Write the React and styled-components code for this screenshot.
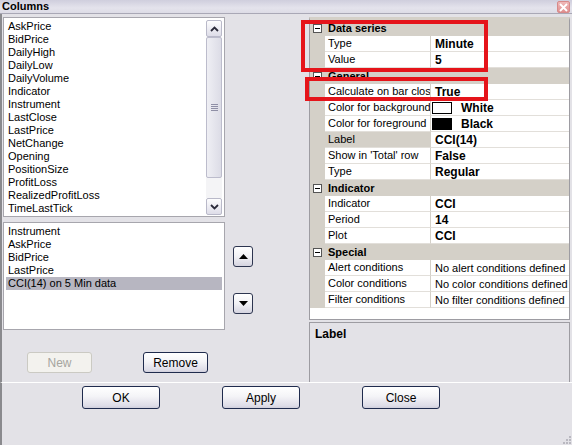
import React from "react";
import styled, { createGlobalStyle } from "styled-components";

const GlobalStyle = createGlobalStyle`
  html, body {
    margin: 0;
    padding: 0;
    background: #e3e2e7;
  }
  * { box-sizing: border-box; }
`;

const available = [
  "AskPrice", "BidPrice", "DailyHigh", "DailyLow", "DailyVolume", "Indicator",
  "Instrument", "LastClose", "LastPrice", "NetChange", "Opening", "PositionSize",
  "ProfitLoss", "RealizedProfitLoss", "TimeLastTick",
];

const chosen = ["Instrument", "AskPrice", "BidPrice", "LastPrice", "CCI(14) on 5 Min data"];

const rows = [
  { cat: "Data series" },
  { name: "Type", value: "Minute" },
  { name: "Value", value: "5" },
  { cat: "General" },
  { name: "Calculate on bar close", value: "True" },
  { name: "Color for background", value: "White", swatch: "#ffffff" },
  { name: "Color for foreground", value: "Black", swatch: "#000000" },
  { name: "Label", value: "CCI(14)", selected: true },
  { name: "Show in 'Total' row", value: "False" },
  { name: "Type", value: "Regular" },
  { cat: "Indicator" },
  { name: "Indicator", value: "CCI" },
  { name: "Period", value: "14" },
  { name: "Plot", value: "CCI" },
  { cat: "Special" },
  { name: "Alert conditions", value: "No alert conditions defined", plain: true },
  { name: "Color conditions", value: "No color conditions defined", plain: true },
  { name: "Filter conditions", value: "No filter conditions defined", plain: true },
];

const Chevron = ({ down }) => (
  <svg width="9" height="6" viewBox="0 0 9 6">
    <path
      d={down ? "M1 1 L4.5 4.5 L8 1" : "M1 5 L4.5 1.5 L8 5"}
      fill="none"
      stroke="#2b2b3a"
      strokeWidth="1.8"
    />
  </svg>
);

const Triangle = ({ down }) => (
  <svg width="9" height="5" viewBox="0 0 9 5">
    <path d={down ? "M0 0 H9 L4.5 5 Z" : "M0 5 H9 L4.5 0 Z"} fill="#000" />
  </svg>
);

const App = () => {
  return (
    <Window>
      <GlobalStyle />
      <TitleBar>
        <Title>Columns</Title>
        <CloseBtn>
          <svg width="9" height="9" viewBox="0 0 9 9">
            <path d="M1 1 L8 8 M8 1 L1 8" stroke="#fff" strokeWidth="1.8" />
          </svg>
        </CloseBtn>
      </TitleBar>

      <Body>
        <LeftPane>
          <ListBox $height={200}>
            <Items>
              {available.map((a) => (
                <Item key={a}>{a}</Item>
              ))}
            </Items>
            <ScrollBar>
              <ScrollBtn><Chevron /></ScrollBtn>
              <Track>
                <Thumb>
                  <Grip />
                </Thumb>
              </Track>
              <ScrollBtn><Chevron down /></ScrollBtn>
            </ScrollBar>
          </ListBox>

          <ChosenRow>
            <ListBox $height={108}>
              <Items>
                {chosen.map((c, i) => (
                  <Item key={c} $selected={i === chosen.length - 1}>{c}</Item>
                ))}
              </Items>
            </ListBox>
            <ArrowCol>
              <ArrowBtn><Triangle /></ArrowBtn>
              <ArrowBtn><Triangle down /></ArrowBtn>
            </ArrowCol>
          </ChosenRow>

          <EditButtons>
            <Button $w={65} $h={21} disabled>New</Button>
            <Button $w={65} $h={21}>Remove</Button>
          </EditButtons>
        </LeftPane>

        <RightPane>
          <Grid>
            {rows.map((r, i) =>
              r.cat ? (
                <CatRow key={i}>
                  <Gutter>
                    <Expander>
                      <svg width="9" height="9" viewBox="0 0 9 9">
                        <rect x="0.5" y="0.5" width="8" height="8" fill="none" stroke="#555" />
                        <path d="M2 4.5 H7" stroke="#000" />
                      </svg>
                    </Expander>
                  </Gutter>
                  <CatName>{r.cat}</CatName>
                </CatRow>
              ) : (
                <PropRow key={i}>
                  <Gutter />
                  <NameCell $selected={r.selected}>{r.name}</NameCell>
                  <ValueCell $plain={r.plain}>
                    {r.swatch && <Swatch $color={r.swatch} />}
                    {r.value}
                  </ValueCell>
                </PropRow>
              )
            )}
          </Grid>
          <DescBox>Label</DescBox>
          <RedBox $left={-8} $top={3} $w={187} $h={52} />
          <RedBox $left={-4} $top={60} $w={183} $h={24} />
        </RightPane>
      </Body>

      <Footer>
        <Button $w={78} $h={23}>OK</Button>
        <Button $w={78} $h={23}>Apply</Button>
        <Button $w={78} $h={23}>Close</Button>
      </Footer>
      <ResizeGrip>
        <svg width="12" height="12" viewBox="0 0 12 12">
          {[[9, 3], [9, 6], [6, 6], [9, 9], [6, 9], [3, 9]].map(([x, y]) => (
            <rect key={`${x}-${y}`} x={x} y={y} width="2" height="2" fill="#b9b8c0" />
          ))}
        </svg>
      </ResizeGrip>
    </Window>
  );
};

export default App;

const Window = styled.div`
  position: relative;
  width: 572px;
  height: 445px;
  display: flex;
  flex-direction: column;
  background: #e3e2e7;
  font-family: "Liberation Sans", Arial, sans-serif;
  font-size: 11px;
  color: #000;
  overflow: hidden;
`;

const TitleBar = styled.div`
  height: 14px;
  display: flex;
  align-items: center;
  justify-content: space-between;
  padding: 0 2px 0 2px;
  background: linear-gradient(to bottom, #cfcedd, #e4e3ec 60%, #dddce6);
  border-bottom: 1px solid #a9a8b6;
`;

const Title = styled.span`
  font-weight: bold;
  font-size: 11px;
  line-height: 13px;
`;

const CloseBtn = styled.div`
  width: 13px;
  height: 12px;
  margin-top: 1px;
  display: flex;
  align-items: center;
  justify-content: center;
  background: linear-gradient(to bottom, #efb9b9, #e08f8f);
  border: 1px solid #d78a8a;
  border-radius: 2px;
`;

const Body = styled.div`
  height: 368px;
  display: flex;
  padding: 3px 0 0 1px;
  border-left: 2px solid #8a8a8e;
`;

const LeftPane = styled.div`
  width: 306px;
  display: flex;
  flex-direction: column;
`;

const ListBox = styled.div`
  width: 222px;
  height: ${(p) => p.$height}px;
  display: flex;
  background: #fff;
  border: 1px solid #a7a6ad;
  padding: 2px 1px 1px 1px;
`;

const Items = styled.div`
  flex: 1;
  display: flex;
  flex-direction: column;
  padding-left: 1px;
  padding-right: 1px;
`;

const Item = styled.div`
  height: 13px;
  line-height: 13px;
  padding-left: 2px;
  white-space: nowrap;
  background: ${(p) => (p.$selected ? "#b7b6c1" : "transparent")};
`;

const ScrollBar = styled.div`
  width: 16px;
  display: flex;
  flex-direction: column;
  margin-right: 1px;
`;

const ScrollBtn = styled.div`
  height: 17px;
  display: flex;
  align-items: center;
  justify-content: center;
  border: 1px solid #b9b9c9;
  border-radius: 2px;
  background: linear-gradient(to bottom, #fdfdfe, #dedde8);
`;

const Track = styled.div`
  flex: 1;
  display: flex;
  flex-direction: column;
  background: #f4f4f6;
  padding-bottom: 20px;
`;

const Thumb = styled.div`
  flex: 1;
  display: flex;
  align-items: center;
  justify-content: center;
  border: 1px solid #bcbccc;
  border-radius: 2px;
  background: linear-gradient(to right, #efeff4, #dcdce6);
`;

const Grip = styled.div`
  width: 7px;
  height: 7px;
  background: repeating-linear-gradient(
    to bottom,
    #8f8fa6 0,
    #8f8fa6 1px,
    transparent 1px,
    transparent 2px
  );
`;

const ChosenRow = styled.div`
  display: flex;
  margin-top: 5px;
`;

const ArrowCol = styled.div`
  display: flex;
  flex-direction: column;
  gap: 26px;
  margin-left: 8px;
  padding-top: 24px;
`;

const ArrowBtn = styled.div`
  width: 20px;
  height: 21px;
  display: flex;
  align-items: center;
  justify-content: center;
  border: 1px solid #2d3550;
  border-radius: 3px;
  background: linear-gradient(to bottom, #ffffff, #f1f1f5 50%, #d5d4e0);
`;

const EditButtons = styled.div`
  display: flex;
  gap: 51px;
  margin-top: 22px;
  padding-left: 24px;
`;

const Button = styled.div`
  width: ${(p) => p.$w}px;
  height: ${(p) => p.$h}px;
  display: flex;
  align-items: center;
  justify-content: center;
  font-size: 12px;
  border-radius: 3px;
  border: 1px solid ${(p) => (p.disabled ? "#cbcac3" : "#1f2b4d")};
  color: ${(p) => (p.disabled ? "#a6a59f" : "#000")};
  background: ${(p) =>
    p.disabled
      ? "#f3f2ee"
      : "linear-gradient(to bottom, #ffffff, #f4f4f7 45%, #dddce7 90%, #cfcedb)"};
`;

const RightPane = styled.div`
  position: relative;
  width: 261px;
  display: flex;
  flex-direction: column;
  gap: 2px;
`;

const Grid = styled.div`
  height: 303px;
  display: flex;
  flex-direction: column;
  background: #fff;
  border: 1px solid #9d9ca2;
  border-top: 3px solid #d4d0c8;
`;

const CatRow = styled.div`
  height: 16px;
  display: grid;
  grid-template-columns: 15px 1fr;
  background: #d4d0c8;
`;

const PropRow = styled.div`
  height: 16px;
  display: grid;
  grid-template-columns: 15px 106px 1fr;
`;

const Gutter = styled.div`
  background: #d4d0c8;
  display: flex;
  align-items: center;
  justify-content: center;
`;

const Expander = styled.div`
  width: 9px;
  height: 9px;
  display: flex;
  background: #fff;
`;

const CatName = styled.div`
  font-weight: bold;
  line-height: 16px;
  padding-left: 3px;
`;

const NameCell = styled.div`
  line-height: 15px;
  padding-left: 3px;
  white-space: nowrap;
  overflow: hidden;
  border-bottom: 1px solid #e2dfda;
  border-right: 1px solid #d4d0c8;
  background: ${(p) => (p.$selected ? "#d4d0c8" : "#fff")};
`;

const ValueCell = styled.div`
  display: flex;
  align-items: center;
  gap: 9px;
  padding-left: 4px;
  white-space: nowrap;
  overflow: hidden;
  border-bottom: 1px solid #e2dfda;
  font-weight: ${(p) => (p.$plain ? "normal" : "bold")};
  font-size: ${(p) => (p.$plain ? "11px" : "12px")};
`;

const Swatch = styled.span`
  width: 20px;
  height: 12px;
  margin-left: -3px;
  border: 1px solid #000;
  background: ${(p) => p.$color};
`;

const DescBox = styled.div`
  flex: 1;
  border: 1px solid #9d9ca2;
  border-bottom: none;
  padding: 4px 5px;
  font-weight: bold;
  font-size: 12px;
`;

const RedBox = styled.div`
  position: absolute;
  left: ${(p) => p.$left}px;
  top: ${(p) => p.$top}px;
  width: ${(p) => p.$w}px;
  height: ${(p) => p.$h}px;
  border: 4px solid #e5141a;
  pointer-events: none;
`;

const Footer = styled.div`
  flex: 1;
  display: flex;
  gap: 62px;
  padding: 3px 0 0 80px;
  border-top: 1px solid #ffffff;
  border-left: 2px solid #8a8a8e;
`;

const ResizeGrip = styled.div`
  position: absolute;
  right: 0;
  bottom: 0;
  width: 12px;
  height: 12px;
`;
